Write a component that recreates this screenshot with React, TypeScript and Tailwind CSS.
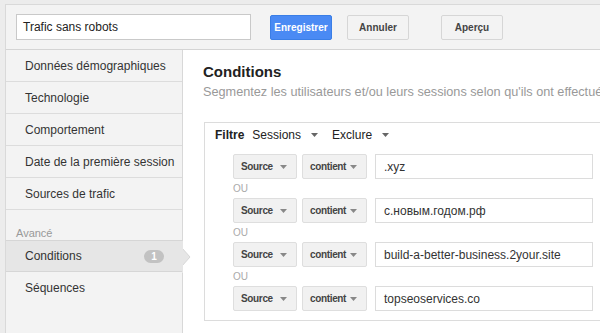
import type { ReactNode } from "react";

const font = { fontFamily: '"Liberation Sans", Arial, sans-serif' };

function Caret({ color = "#777" }: { color?: string }) {
  return (
    <svg width="7" height="4" viewBox="0 0 7 4" className="shrink-0">
      <path d="M0 0h7L3.5 4z" fill={color} />
    </svg>
  );
}

function GreyButton({ children }: { children: ReactNode }) {
  return (
    <button className="h-[25px] w-[62px] rounded-[2px] border border-[#d6d6d6] bg-[#f3f3f3] text-[10px] font-bold text-[#444]">
      {children}
    </button>
  );
}

function Select({ label, width }: { label: string; width: string }) {
  return (
    <div
      className={`flex h-[25px] ${width} items-center justify-between rounded-[2px] border border-[#dedede] bg-[#f1f1f1] pl-[7px] pr-[9px] text-[10px] font-bold text-[#444]`}
    >
      <span className="tracking-[-0.35px]">{label}</span>
      <Caret color="#888" />
    </div>
  );
}

function Row({ value }: { value: string }) {
  return (
    <div className="flex items-center">
      <Select label="Source" width="w-[64px]" />
      <div className="ml-[5px]">
        <Select label="contient" width="w-[65px]" />
      </div>
      <div className="ml-[8px] flex h-[25px] w-[218px] items-center border border-[#dcdcdc] bg-white pl-[8px] text-[12px] text-[#333]">
        {value}
      </div>
    </div>
  );
}

const navItems = [
  "Données démographiques",
  "Technologie",
  "Comportement",
  "Date de la première session",
  "Sources de trafic",
];

const values = [
  ".xyz",
  "с.новым.годом.рф",
  "build-a-better-business.2your.site",
  "topseoservices.co",
];

export default function App() {
  return (
    <div
      className="h-[333px] w-[600px] overflow-hidden bg-[#ececec] pl-[5px] pt-[4px]"
      style={font}
    >
      <div className="h-full border-l border-t border-[#d9d9d9] bg-[#f3f3f3]">
        {/* top bar */}
        <div className="flex h-[45px] items-center border-b border-[#d4d4d4] pl-[10px]">
          <div className="flex h-[26px] w-[235px] items-center border border-[#c9c9c9] bg-white pl-[6px] text-[12px] text-[#222]">
            Trafic sans robots
          </div>
          <button className="ml-[19px] h-[25px] w-[62px] rounded-[2px] border border-[#3a7ee6] bg-[#4a8af4] text-[10px] font-bold text-white">
            Enregistrer
          </button>
          <div className="ml-[15px]">
            <GreyButton>Annuler</GreyButton>
          </div>
          <div className="ml-[32px]">
            <GreyButton>Aperçu</GreyButton>
          </div>
        </div>

        <div className="flex h-full">
          {/* sidebar */}
          <div className="w-[177px] shrink-0 border-r border-[#d8d8d8] text-[12px] text-[#333]">
            {navItems.map((item) => (
              <div
                key={item}
                className="flex h-[32px] items-center border-b border-[#dcdcdc] pl-[19px]"
              >
                {item}
              </div>
            ))}
            <div className="pl-[10px] pt-[16px] text-[11px] leading-[14px] text-[#999]">
              Avancé
            </div>
            <div className="relative flex h-[32px] items-center border-y border-[#d6d6d6] bg-[#e6e6e6] pl-[19px] pr-[18px]">
              <span className="flex-1">Conditions</span>
              <span className="flex h-[13px] w-[20px] items-center justify-center rounded-full bg-[#c2c2c2] text-[10px] font-bold text-white">
                1
              </span>
              <svg
                width="10"
                height="34"
                viewBox="0 0 10 34"
                className="absolute right-[-10px] top-[-1px]"
              >
                <path d="M0 0L0 8 8 17 0 26 0 34" fill="#e6e6e6" stroke="#d6d6d6" />
                <path d="M0 1v32" stroke="#e6e6e6" strokeWidth="2" />
              </svg>
            </div>
            <div className="flex h-[32px] items-center pl-[19px]">Séquences</div>
          </div>

          {/* content */}
          <div className="min-w-0 flex-1 overflow-hidden bg-white pl-[20px] pt-[13px]">
            <div className="text-[15px] font-bold leading-[18px] text-[#222]">
              Conditions
            </div>
            <div className="mt-[2px] whitespace-nowrap text-[12.7px] text-[#999]">
              Segmentez les utilisateurs et/ou leurs sessions selon qu'ils ont effectué un
            </div>
            <div className="ml-[1px] mt-[20px] h-[199px] w-[420px] border border-[#dcdcdc] pl-[10px] pt-[3px]">
              <div className="flex h-[18px] items-center text-[12px] text-[#222]">
                <span className="font-bold">Filtre</span>
                <span className="ml-[8px]">Sessions</span>
                <span className="ml-[10px]">
                  <Caret color="#666" />
                </span>
                <span className="ml-[14px]">Exclure</span>
                <span className="ml-[10px]">
                  <Caret color="#666" />
                </span>
              </div>
              <div className="mt-[10px] pl-[18px]">
                {values.map((v, i) => (
                  <div key={v}>
                    {i > 0 && (
                      <div className="flex h-[19px] items-center text-[10px] text-[#aaa]">
                        OU
                      </div>
                    )}
                    <Row value={v} />
                  </div>
                ))}
              </div>
            </div>
          </div>
        </div>
      </div>
    </div>
  );
}
